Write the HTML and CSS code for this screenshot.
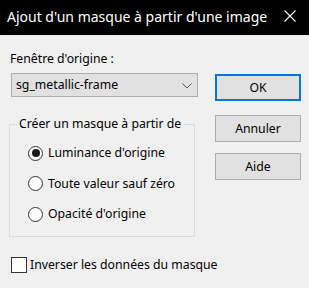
FILE: index.html
```html
<!DOCTYPE html>
<html lang="fr">
<head>
<meta charset="utf-8">
<link rel="stylesheet" href="styles.css">
</head>
<body>
<div class="titlebar">
  <span class="title">Ajout d'un masque à partir d'une image</span>
  <svg class="close" width="12" height="12" viewBox="0 0 12 12"><path d="M0.5 0.5L11.5 11.5M11.5 0.5L0.5 11.5" stroke="#fff" stroke-width="1.1" fill="none"/></svg>
</div>
<div class="content">
  <div class="left">
    <div class="field-label">Fenêtre d'origine :</div>
    <div class="select">
      <span>sg_metallic-frame</span>
      <svg class="chev" width="10" height="6" viewBox="0 0 10 6"><path d="M0.5 0.5L5 5L9.5 0.5" stroke="#555" stroke-width="1" fill="none"/></svg>
    </div>
    <fieldset class="group">
      <legend>Créer un masque à partir de</legend>
      <div class="radio-row"><span class="radio checked"></span><span>Luminance d'origine</span></div>
      <div class="radio-row"><span class="radio"></span><span>Toute valeur sauf zéro</span></div>
      <div class="radio-row"><span class="radio"></span><span>Opacité d'origine</span></div>
    </fieldset>
    <div class="check-row"><span class="checkbox"></span><span>Inverser les données du masque</span></div>
  </div>
  <div class="right">
    <div class="btn default">OK</div>
    <div class="btn b2">Annuler</div>
    <div class="btn b3">Aide</div>
  </div>
</div>
</body>
</html>
```
FILE: styles.css
```css
html, body {
  margin: 0;
  padding: 0;
}
body {
  width: 309px;
  height: 288px;
  background: #f0f0f0;
  font-family: "Segoe UI", "Noto Sans", "Open Sans", sans-serif;
  font-size: 12.25px;
  color: #000;
  overflow: hidden;
  white-space: nowrap;
}
.titlebar {
  height: 35px;
  background: #000;
  display: flex;
  align-items: center;
  justify-content: space-between;
  padding: 0 13px 0 7px;
  box-sizing: border-box;
}
.title {
  color: #fff;
  font-size: 14px;
  line-height: 20px;
  margin-top: -1px;
}
.close {
  display: block;
  margin-top: -3px;
}
.content {
  display: flex;
  padding-left: 9px;
}
.left {
  width: 189px;
  flex-shrink: 0;
}
.field-label {
  margin-top: 16px;
  line-height: 16px;
  padding-left: 1px;
}
.select {
  margin-top: 6px;
  margin-left: 2px;
  width: 187px;
  height: 24px;
  box-sizing: border-box;
  border: 1px solid #adadad;
  background: #e1e1e1;
  display: flex;
  align-items: center;
  justify-content: space-between;
  padding: 0 5px 0 4px;
  line-height: 16px;
}
.chev {
  display: block;
  margin-top: 1px;
}
.group {
  margin: 19px 0 0 0;
  padding: 6px 0 6px 0;
  width: 186px;
  box-sizing: border-box;
  border: 1px solid #dcdcdc;
}
.group legend {
  margin-left: 7px;
  padding: 0 2px;
  line-height: 16px;
}
.radio-row {
  display: flex;
  align-items: center;
  height: 30.5px;
  padding-left: 18px;
  gap: 5px;
  line-height: 16px;
}
.radio {
  flex-shrink: 0;
  width: 15px;
  height: 15px;
  box-sizing: border-box;
  border: 1px solid #333;
  border-radius: 50%;
  background: #fff;
  display: flex;
  align-items: center;
  justify-content: center;
}
.radio.checked::after {
  content: "";
  width: 8px;
  height: 8px;
  border-radius: 50%;
  background: #1a1a1a;
}
.check-row {
  display: flex;
  align-items: center;
  margin-top: 20px;
  padding-left: 2px;
  gap: 3px;
  line-height: 16px;
}
.checkbox {
  flex-shrink: 0;
  width: 16px;
  height: 16px;
  box-sizing: border-box;
  border: 1px solid #333;
  background: #fff;
}
.right {
  margin-left: 17px;
  width: 86px;
  flex-shrink: 0;
  padding-top: 39px;
}
.btn {
  height: 27px;
  box-sizing: border-box;
  border: 1px solid #adadad;
  background: #e1e1e1;
  display: flex;
  align-items: center;
  justify-content: center;
  line-height: 16px;
}
.btn.default {
  border: 2px solid #0078d7;
}
.btn.b2 {
  margin-top: 14px;
}
.btn.b3 {
  margin-top: 11px;
}
```
